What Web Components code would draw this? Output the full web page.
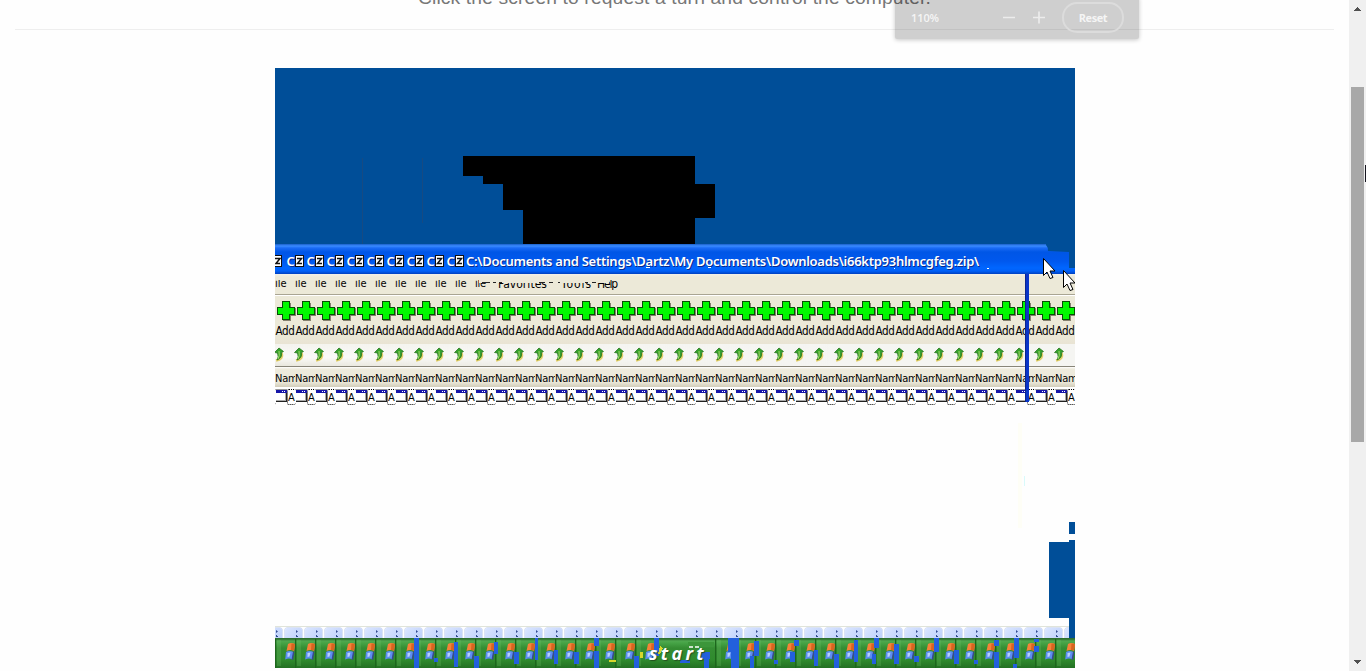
<!DOCTYPE html>
<html lang="en">
<head>
<meta charset="utf-8">
<title>Remote screen</title>
<style>
html,body{margin:0;height:671px;overflow:hidden;background:#fefefe;font-family:"Liberation Sans",sans-serif}
</style>
</head>
<body>
<remote-page></remote-page>
<script>
const define = (name, html, after) => customElements.define(name, class extends HTMLElement {
  connectedCallback() {
    if (this.shadowRoot) return;
    const root = this.attachShadow({mode: 'open'});
    const t = document.createElement('template');
    t.innerHTML = typeof html === 'function' ? html(this) : html;
    root.append(t.content.cloneNode(true));
    if (after) after(this, root);
  }
});
const times = (n, f) => Array.from({length: n}, (_, i) => f(i)).join('');

// Text spread to an exact width with letter spacing.
define('fit-text', `<style>:host{display:block;white-space:pre}span{display:inline-block}</style><span><slot></slot></span>`, (el, root) => {
  const s = root.querySelector('span');
  const w = +el.getAttribute('w');
  s.style.letterSpacing = (w - s.getBoundingClientRect().width) / el.textContent.length + 'px';
});

define('page-scrollbar', `<style>
:host{display:flex;flex-direction:column;align-items:center;width:17px;height:671px;background:#f0f0f0;position:relative}
svg{display:block;flex:none}
.thumb{width:13px;height:355px;background:#a8a8a8;margin:75px 0 218px}
i{position:absolute;right:0;top:165px;width:1px;height:17px;background:#14141e}
</style>
<svg width="7" height="12" shape-rendering="crispEdges"><path d="M3 7h1v1h1v1h1v1h1v1H0v-1h1V9h1V8h1z" fill="#505050"/></svg>
<div class="thumb"></div>
<svg width="7" height="5" shape-rendering="crispEdges"><path d="M0 0h7v1H6v1H5v1H4v1H3V3H2V2H1V1H0z" fill="#505050"/></svg><i></i>`);

define('zoom-bubble', `<style>
:host{display:flex;align-items:center;box-sizing:border-box;width:244px;height:43px;padding:0 15px 0 16px;background:rgba(0,0,0,.185);border-radius:2px;box-shadow:0 1px 4px rgba(0,0,0,.22);color:#f5f5f5;font:600 11px "Open Sans",sans-serif}
.pc{width:92px;letter-spacing:-.1px}
svg{display:block;margin-right:17px}
.reset{margin-left:auto;box-sizing:border-box;width:62px;height:31px;border:2px solid #dcdcdc;border-radius:15px;display:flex;align-items:center;justify-content:center;font-weight:700;letter-spacing:-.4px}
</style><span class="pc">110%</span>
<svg width="42" height="13"><path d="M0 6.500h12M30 6.500h12M36 .5v12" stroke="#ececec" stroke-width="1.700"/></svg>
<span class="reset">Reset</span>`);

define('xp-title', `<style>
:host{display:flex;height:30px;overflow:hidden;position:relative;color:#fff;font:600 13px/34px "Noto Sans","Open Sans",sans-serif;text-shadow:1px 1px 0 #0a2a8c;background:linear-gradient(#1a5fc8 0,#3a8bff 2px,#1a6bf5 4px,#0056e6 8px,#0058ee 17px,#0066ff 24px,#0060f8 27px,#0040c0 30px)}
svg{display:block;flex:none;margin-top:11px}
.first{margin-right:4px}
.c{width:20px;display:flex;flex:none}
.c b{width:9px;font-weight:600;font-size:13px;text-indent:.5px}
.corner{position:absolute;right:0;top:0;width:29px;height:24px;margin:0}
</style>
<svg class="first" width="7" height="12"><rect x="-2" y=".5" width="8.500" height="11" fill="#fff" stroke="#111"/><path d="M0 3.500h5L1 8.500h4" stroke="#111" stroke-width="1.500" fill="none"/></svg>
${times(9, () => `<span class="c"><b>C</b><svg width="9" height="12"><rect x=".5" y=".5" width="8" height="11" fill="#fff" stroke="#111"/><path d="M2 3.500h4.500L2.500 8.500H7" stroke="#111" stroke-width="1.500" fill="none"/></svg></span>`)}
<fit-text w="513">C:\\Documents and Settings\\Dartz\\My Documents\\Downloads\\i66ktp93hlmcgfeg.zip\\</fit-text>
<svg class="corner" viewBox="0 0 29 24"><path d="M0 0H29V24H23V8L2 7Q2 3 0 1z" fill="#004e98"/></svg>
<svg class="corner" style="left:371px;right:auto;top:23px;width:344px;height:3px" shape-rendering="crispEdges"><path d="M0 0h4v1H0zM62 0h3v1h-3zM248 1h1v1h-1zM341 1h2v1h-2z" fill="#fff"/></svg>`);

define('xp-menu', `<style>
:host{display:block;box-sizing:border-box;height:21px;padding-top:6px;background:linear-gradient(#f3f0e8,#ece9d8 3px);border-bottom:1px solid #a9a593;font:11px/11px "DejaVu Sans Condensed","DejaVu Sans",sans-serif;color:#000;position:relative}
.crop{display:flex;height:10px;overflow:hidden}
.crop>*{flex:none;margin-top:-3px;height:14px;line-height:14px}
.t{width:20px}
.m2{margin-left:12px}.m3{margin-left:14px}.m4{margin-left:5px}
.big{font-size:12px}
svg{position:absolute;left:204px;top:5px}
</style><div class="crop">${times(10, () => '<span class="t">ile</span>')}
<fit-text w="11">ile</fit-text><fit-text class="m2 big" w="49">Favorites</fit-text><fit-text class="m3 big" w="31">Tools</fit-text><fit-text class="m4 big" w="20">Help</fit-text></div>
<svg width="130" height="6" shape-rendering="crispEdges"><path d="M0 0h140v4H0z" fill="#ece9d8"/><path d="M3 3h8v1H3zM14 3h3v1h-3zM20 3h3v1h-3zM60 3h6v1h-6zM70 3h4v1h-4zM79 3h2v1h-2zM106 3h3v1h-3zM113 3h4v1h-4z" fill="#222"/></svg>`);

define('xp-toolbar', `<style>
:host{display:block;box-sizing:border-box;height:49px;padding-top:5px;border-top:1px solid #fff;background:linear-gradient(#ece9d8 75%,#e9e4d4);font:11.500px/14px "DejaVu Sans Condensed","DejaVu Sans",sans-serif}
.row{display:flex;width:800px;overflow:hidden}
.row>*{flex:none;width:20px;box-sizing:border-box}
.p{padding-left:2px;height:20px}
.a{margin-top:3px}.a span{letter-spacing:-.3px;text-indent:.5px;white-space:nowrap}
svg{display:block;overflow:visible}
</style>
<div class="row">${times(40, () => '<span class="p"><svg width="19" height="20" shape-rendering="crispEdges"><path d="M13 2h1v5h5v8h-5v5H6v-1h7v-5h5V7h-5z" fill="#85816f"/><path d="M5 0h8v6h5v8h-5v5H5v-5H0V6h5z" fill="#064d06"/><path d="M6 1h6v6h5v6h-5v5H6v-5H1V7h5z" fill="#00fa00"/></svg></span>')}</div>
<div class="row a">${times(40, () => '<span>Add</span>')}</div>`);

define('xp-address', `<style>
:host{display:flex;height:23px;background:linear-gradient(90deg,#fff0,#f5f5f2 70%),linear-gradient(#f4f3ee,#fafaf8 60%,#e9e7dd);overflow:hidden;border-bottom:1px solid #888579}
svg{display:block;flex:none;margin:3px 11px 0 0;overflow:visible;width:9px}
svg:first-of-type{margin-left:-1px}
</style>${times(40, () => '<svg width="9" height="16"><path d="M2 13.500Q9.500 12 7.500 6" fill="none" stroke="#e3cf6c" stroke-width="2.800"/><path d="M.5 5.500 5 1l4.500 3.500-2 1Q8.500 11 3 13 5 10 3.500 6z" fill="#35a12c" stroke="#28751f" stroke-width=".8"/><path d="M5 4q1 5-1 8" stroke="#a6dc68" fill="none"/></svg>')}`);

define('xp-columns', `<style>
:host{display:flex;height:20px;overflow:hidden;background:linear-gradient(#fff 0,#eeebdd 2px,#ebe8d9 15px,#d2cdba 20px);font:11px/23px "DejaVu Sans Condensed","DejaVu Sans",sans-serif}
span{flex:none;box-sizing:border-box;width:20px;overflow:hidden;letter-spacing:-.2px}
</style>${times(40, () => '<span>Nam</span>')}`);

define('xp-files', `<style>
:host{display:flex;height:19px;overflow:hidden;background:#fff;font:11px/19px "DejaVu Sans Condensed","DejaVu Sans",sans-serif}
.t{flex:none;width:20px;display:flex}
.t:first-of-type{margin-left:-8px}
.n{box-sizing:border-box;width:9px;height:16px;margin-top:2px;border:1px dotted #000;border-right:0;border-radius:2px;line-height:16px}
svg{display:block;margin-top:2px}
</style>${times(41, i => `<span class="t"><span class="n">${i ? 'A' : ''}</span><svg width="11" height="16" shape-rendering="crispEdges"><path d="M0 0h11v1H0z" fill="#999"/><path d="M0 1h11v3H0z" fill="#1616a8"/><path d="M6 2h1v1H6zM8 2h1v1H8z" fill="#fff"/><path d="M10 4h1v9H0v-1h10z" fill="#222"/><path d="M9 4h1v8H9zM0 11h9v1H0z" fill="#aaa"/></svg></span>`)}`);

define('xp-tray', `<style>
:host{display:flex;height:11px;overflow:hidden;background:#fff;border-top:1px solid #e0e4da}
span{flex:none;box-sizing:border-box;width:17px;height:10px;margin:1px 3px 0 0;background:linear-gradient(135deg,#dbe6ff,#bdd0fb);border-radius:2px 2px 0 0;padding:2px 0 0 10px;box-shadow:0 0 0 .5px #b8c7ea}
span:first-of-type{margin-left:-10px}
svg{display:block}
</style>${times(41, () => '<span><svg width="3" height="8"><path d="M1 0l2 1.500L1 3zM1 5h1v1h1v1H1z" fill="#344c90"/></svg></span>')}`);

define('xp-taskbar', () => {
  const glitch = [[139,0,5,30],[159,20,4,4],[179,4,4,25],[199,18,5,12],[219,4,4,12],[239,14,5,12],[260,0,3,22],[279,12,4,14],[299,14,5,12],[319,0,5,8],[319,13,5,17],[359,18,5,12],[379,0,5,18],[405,22,10,3],[425,14,10,7],[429,21,5,9],[453,0,11,14],[456,14,8,16],[475,18,4,12],[479,3,5,15],[499,22,4,4],[519,2,5,6],[515,14,5,10],[539,12,4,16],[559,16,5,14],[579,2,4,22],[599,0,5,10],[597,16,4,10],[619,6,5,20],[639,18,5,6],[659,0,5,14],[679,12,5,14],[699,22,4,4],[719,2,5,6],[719,14,5,16],[739,0,5,20],[738,26,4,4],[759,1,5,3],[759,8,5,6]];
  const logo = '<path d="M13 6q3-2 7 0l-1 7q-3-2-7.500 0z" fill="#f58238"/><path d="M16.500 5.500 20 6l-1 6.500-3-.5z" fill="#d86420"/><path d="M11 14q3-2 7.500 0l-1.300 7.500q-3-2-7 0z" fill="#5c8df2"/><path d="M12.500 15l3-.5-1 4-2 .5z" fill="#b9d2ff"/><path d="M18 13.500l1.500.5-1.500 8-1.500-.5z" fill="#394b8c"/>';
  return `<style>
:host{display:block;height:30px;position:relative;overflow:hidden;background:linear-gradient(#2f7030 0,#2f7030 1px,#4fa84f 3px,#46a346 5px,#358d33 10px,#2f8a2d 22px,#237023 30px)}
.row{display:flex}
.row svg{display:block;flex:none}
.over{position:absolute;inset:0}
.start{position:absolute;left:374px;top:5px;height:20px;width:64px;color:#fff;font:italic 700 18px/20px "Open Sans",sans-serif;text-shadow:1px 1px 1px #24501f}
.cut{left:405px;top:4px}
</style>
<div class="row">${times(40, i => `<svg width="20" height="30">${i > 18 && i < 22 ? '' : '<path d="M.5 1v29" stroke="#1d661d" stroke-width="1.500"/><path d="M4 2v26" stroke="#6fbe66" stroke-opacity=".25" stroke-width="4"/>' + logo}</svg>`)}</div>
<svg class="over" width="800" height="30" shape-rendering="crispEdges"><g fill="#2360dc">${glitch.map(([x,y,w,h]) => `<path d="M${x} ${y}h${w}v${h}h${-w}z"/>`).join('')}</g><path d="M365 14h3v6h-3zM334 22h7v2h-7zM385 8l3 2-3 6h-2z" fill="#d6d62b"/></svg>
<span class="start"><fit-text w="58">start</fit-text></span>
<svg class="over cut" width="36" height="7"><path d="M8 0h26v5H8z" fill="#3c963a"/><path d="M9 5h4M15 5h4" stroke="#fff" stroke-width="1.500"/></svg>`;
});

// The 800x600 guest display.
define('guest-screen', `<style>
:host{display:flex;flex-direction:column;width:800px;height:600px;position:relative;overflow:hidden;background:#fefefe}
.wall{height:176px;background:#004e98}
.wall svg{display:block}
.body{height:221px;background:#fefefe}
.o{position:absolute;display:block}
</style>
<div class="wall"><svg width="800" height="176" shape-rendering="crispEdges"><path d="M188 88h232v28h20v34h-20v26H248v-34h-20v-26h-20v-8h-20z"/><path d="M87 90v86M147 90v65" stroke="#174a82" stroke-width="1"/></svg></div>
<xp-title></xp-title><xp-menu></xp-menu><xp-toolbar></xp-toolbar><xp-address></xp-address><xp-columns></xp-columns><xp-files></xp-files>
<div class="body"></div><xp-tray></xp-tray><xp-taskbar></xp-taskbar>
<svg class="o" style="left:0;top:0" width="800" height="600"><path d="M750 206h4v128h-4z" fill="#0a35c8"/><path d="M750 206h1v128h-1z" fill="#0a258e"/><path d="M794 454h6v12h-6zM774 474h20v-2h6v98h-6v-20h-20z" fill="#004e98"/><path d="M743 355h4v105h-4z" fill="#fefef6"/><path d="M749 408h1v10h-1z" fill="#d9fafa"/><g fill="#fff" stroke="#000" stroke-width="1"><path d="M768.500 190.500v17l3.500-3.500 3 6.500 3-1-3-6.500h5z"/><path d="M788.500 202.500v17l3.500-3.500 3 6.500 3-1-3-6.500h5z"/></g></svg>`);

define('remote-page', `<style>
:host{display:flex;height:671px;position:relative}
main{flex:1;display:flex;flex-direction:column;align-items:stretch}
.hint{height:29px;padding-left:418px;color:#777;font:19.250px/22px "Liberation Sans",sans-serif}
.hint fit-text{margin-top:-13px}
.rule{height:1px;background:#eee;margin:0 15px}
guest-screen{margin:38px 0 0 275px}
zoom-bubble{position:absolute;left:895px;top:-4px}
</style>
<main><div class="hint"><fit-text w="513">Click the screen to request a turn and control the computer.</fit-text></div><div class="rule"></div><guest-screen></guest-screen></main>
<page-scrollbar></page-scrollbar><zoom-bubble></zoom-bubble>`);
</script>
</body>
</html>
